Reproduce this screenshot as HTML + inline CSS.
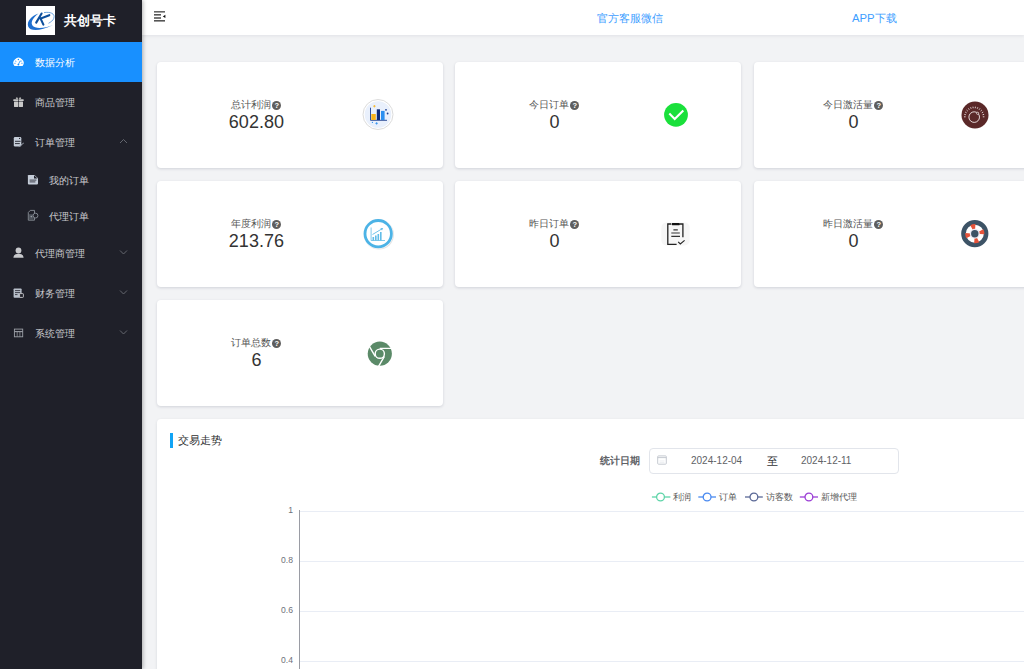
<!DOCTYPE html>
<html><head><meta charset="utf-8">
<style>
*{margin:0;padding:0;box-sizing:border-box}
html,body{width:1024px;height:669px;overflow:hidden}
body{font-family:"Liberation Sans",sans-serif;background:#f2f3f5;position:relative;color:#333}
svg{position:absolute;overflow:visible}
#side{position:absolute;left:0;top:0;width:142px;height:669px;background:#1f2029;z-index:3;box-shadow:1px 0 4px rgba(0,0,0,.3)}
#logo{position:absolute;left:26px;top:6px;width:29px;height:29px;background:#fff}
#brand{position:absolute;left:64px;top:11px;color:#fff;font-weight:bold;font-size:13px;line-height:20px}
.mi{position:absolute;left:0;width:142px;height:40px;color:#c9cacd;font-size:10px;line-height:40px}
.mi .t{position:absolute;left:35px;top:1.2px}
.mi.sub .t{left:49px}
.mi.act{background:#1890ff;color:#fff}
#hdr{position:absolute;left:142px;top:0;width:882px;height:35px;background:#fff;box-shadow:0 1px 3px rgba(20,30,60,.08);z-index:2}
.hl{position:absolute;top:10px;font-size:11.3px;line-height:16px;color:#409eff}
.card{position:absolute;width:286px;height:106px;background:#fff;border-radius:4px;box-shadow:0 1px 3px rgba(20,30,60,.15)}
.card .lb{position:absolute;left:0;top:37px;width:198.8px;text-align:center;font-size:10px;line-height:12px;color:#555}
.card .vl{position:absolute;left:0;top:49px;width:198.8px;text-align:center;font-size:18px;line-height:22px;color:#333}
.q{display:inline-block;width:9px;height:9px;border-radius:50%;background:#5e5e5e;color:#fff;font-size:7.5px;line-height:9px;text-align:center;vertical-align:0px;font-weight:bold;margin-left:1px}
#chart{position:absolute;left:157px;top:419px;width:900px;height:300px;background:#fff;border-radius:4px;box-shadow:0 1px 3px rgba(20,30,60,.12)}
</style></head><body>
<div id="side">
  <div id="logo"><svg width="29" height="29" viewBox="0 0 29 29" style="left:0;top:0">
    <path d="M12.5,7.6 C5.5,10 0.5,15.5 2.2,20.5 C4,25.5 14,25.5 27,19 C19,22.3 9,23.5 6.3,19.3 C4.3,15.5 8,11 12.5,7.6 Z" fill="#1f6fcf"/>
    <path d="M18,6.6 C24,5.6 29.5,7.5 27.8,12.3 C27,14.5 25,16 22.5,17.3" fill="none" stroke="#4a8fd8" stroke-width="0.8"/>
    <path d="M15.6,7.5 L10.2,16.6 M23.3,9.2 L14.6,12.6 L17.4,18.6" fill="none" stroke="#0d4f9c" stroke-width="2.1" stroke-linecap="round"/>
  </svg></div>
  <div id="brand">共创号卡</div>
  <div class="mi act" style="top:42px"><span class="t">数据分析</span></div>
  <div class="mi" style="top:82px"><span class="t">商品管理</span></div>
  <div class="mi" style="top:122px"><span class="t">订单管理</span></div>
  <div class="mi sub" style="top:161px;height:37px;line-height:37px"><span class="t">我的订单</span></div>
  <div class="mi sub" style="top:197px;height:37px;line-height:37px"><span class="t">代理订单</span></div>
  <div class="mi" style="top:233px"><span class="t">代理商管理</span></div>
  <div class="mi" style="top:273px"><span class="t">财务管理</span></div>
  <div class="mi" style="top:313px"><span class="t">系统管理</span></div>
  <!-- menu icons -->
  <svg width="142" height="669" viewBox="0 0 142 669" style="left:0;top:0">
    <!-- dashboard -->
    <path d="M14.45,66 A5.1,5.1 0 1 1 22.55,66 Z" fill="#fff"/>
    <g fill="#1890ff"><circle cx="18.4" cy="59.4" r="0.75"/><circle cx="18.4" cy="64.6" r="0.9"/></g>
    <path d="M15.2,61 L16.3,61.5 M21.7,61 L20.6,61.5 M14.3,63.3 H15.6 M22.6,63.3 H21.3 M18.5,64.2 L20.3,60.6" stroke="#1890ff" stroke-width="0.8" fill="none"/>
    <!-- gift -->
    <g fill="#c9c9c9"><rect x="13.3" y="99.3" width="5" height="1.8" rx="0.4"/><rect x="18.9" y="99.3" width="4.8" height="1.8" rx="0.4"/><rect x="14" y="101.6" width="4.3" height="5.3" rx="0.4"/><rect x="18.9" y="101.6" width="4.1" height="5.3" rx="0.4"/>
    <path d="M15.8,99.2 Q15.6,96.8 17.5,97.5 L18.4,99.2 Z M21.2,99.2 Q21.4,96.8 19.5,97.5 L18.6,99.2 Z" fill="#a9a9a9"/></g>
    <!-- order -->
    <rect x="13.8" y="137" width="7.5" height="9.5" rx="1.2" fill="#c5cdd9"/>
    <path d="M15,141.3 H20.6 M15,143.6 H19.8" stroke="#1f2029" stroke-width="0.9"/>
    <circle cx="19.6" cy="138.4" r="0.6" fill="#1f2029"/>
    <path d="M18.8,146.6 L23.8,143" stroke="#9aa2ad" stroke-width="1"/>
    <!-- up arrow -->
    <path d="M120,143 L123.5,139.5 L127,143" fill="none" stroke="#6b6e76" stroke-width="0.9"/>
    <!-- my orders doc -->
    <path d="M28.6,174.9 H34.5 L38,178.2 V183.6 Q38,184.4 37.2,184.4 H28.6 Q27.9,184.4 27.9,183.6 V175.6 Q27.9,174.9 28.6,174.9 Z" fill="#c5cdd9"/>
    <path d="M34,175.2 L37.6,178.6 H34 Z" fill="#1f2029"/>
    <path d="M29.6,180.1 H36.4 M29.6,181.9 H35.4" stroke="#1f2029" stroke-width="0.8"/>
    <!-- agent orders -->
    <rect x="29" y="214.2" width="4.6" height="5.3" fill="#4d525b"/>
    <path d="M28.3,212.5 L30.3,210.4 H34.5 V213.2 M34.5,218 V220.2 H28.3 V212.5" fill="none" stroke="#8a9099" stroke-width="0.9"/>
    <circle cx="35.5" cy="215.6" r="2.4" fill="#1f2029" stroke="#8a9099" stroke-width="0.9"/>
    <circle cx="31.3" cy="216.6" r="0.8" fill="#9aa0a8"/>
    <!-- user -->
    <circle cx="18.5" cy="250.5" r="2.9" fill="#c9cacd"/>
    <path d="M13.4,257.8 Q13.6,253.8 18.5,253.8 Q23.4,253.8 23.6,257.8 Z" fill="#c9cacd"/>
    <!-- finance -->
    <rect x="13.6" y="288.4" width="8" height="9.4" rx="0.8" fill="#b9c0cb"/>
    <path d="M15,290.6 H20.2 M15,292.6 H20.2 M15,294.6 H17.5" stroke="#1f2029" stroke-width="0.8"/>
    <rect x="19.6" y="293.6" width="3.8" height="3.8" rx="0.6" fill="#1f2029" stroke="#c9cacd" stroke-width="0.9"/>
    <!-- system table -->
    <rect x="14.4" y="329.1" width="8.3" height="7.7" fill="none" stroke="#9da1a8" stroke-width="0.9"/>
    <path d="M14.4,331.6 H22.7" stroke="#9da1a8" stroke-width="1.1"/>
    <path d="M17.2,331.6 V336.8 M19.9,331.6 V336.8" stroke="#9da1a8" stroke-width="0.7"/>
    <!-- down arrows -->
    <path d="M120,250.5 L123.5,254 L127,250.5 M120,290.5 L123.5,294 L127,290.5 M120,330.5 L123.5,334 L127,330.5" fill="none" stroke="#6b6e76" stroke-width="0.9"/>
  </svg>
</div>
<div id="hdr">
  <svg width="13" height="12" viewBox="0 0 13 12" style="left:12px;top:11px">
    <rect x="0" y="0" width="11" height="1.6" fill="#666"/>
    <rect x="0" y="3" width="7" height="1.6" fill="#555"/>
    <rect x="0" y="6.2" width="7" height="1.6" fill="#555"/>
    <rect x="0" y="9" width="11" height="1.6" fill="#555"/>
    <path d="M8.8,5.4 L11.4,3.8 V7.1 Z" fill="#111"/>
  </svg>
  <span class="hl" style="left:455px">官方客服微信</span>
  <span class="hl" style="left:710px">APP下载</span>
</div>

<div class="card" style="left:157px;top:62px"><div class="lb">总计利润<span class="q">?</span></div><div class="vl">602.80</div>
  <svg width="40" height="40" viewBox="0 0 40 40" style="left:201px;top:33px">
    <circle cx="20" cy="19.5" r="15" fill="#fff" stroke="#dcdcdc" stroke-width="1"/>
    <circle cx="20" cy="19.5" r="13.3" fill="#e9f0fc"/>
    <path d="M12.5,12.7 V25.3 H29" fill="none" stroke="#1d3f8f" stroke-width="0.9"/>
    <rect x="13.3" y="19" width="4.5" height="6" fill="#f7b21a"/>
    <rect x="18.8" y="14.3" width="3.2" height="10.7" fill="#0f2c7a"/>
    <rect x="23" y="15.9" width="3.6" height="9.1" fill="#2b8ff0"/>
    <path d="M16.4,10 V12.4 M15.2,11.2 H17.6" stroke="#f7b21a" stroke-width="0.8"/>
    <circle cx="28" cy="14.8" r="0.9" fill="#1d3f8f"/><circle cx="29.6" cy="18.5" r="0.9" fill="#1d3f8f"/>
    <circle cx="14.4" cy="27.4" r="0.6" fill="#2b8ff0"/><path d="M18.6,27.2 V29.6 M17.4,28.4 H19.8" stroke="#2b8ff0" stroke-width="0.8"/>
  </svg>
</div>
<div class="card" style="left:455px;top:62px"><div class="lb">今日订单<span class="q">?</span></div><div class="vl">0</div>
  <svg width="30" height="30" viewBox="0 0 30 30" style="left:206px;top:38px">
    <circle cx="15" cy="14.8" r="11.9" fill="#1ae03b"/>
    <path d="M8.3,13.6 L13.7,19 L22.3,10.4" fill="none" stroke="#fff" stroke-width="2.1"/>
  </svg>
</div>
<div class="card" style="left:754px;top:62px"><div class="lb">今日激活量<span class="q">?</span></div><div class="vl">0</div>
  <svg width="30" height="30" viewBox="0 0 30 30" style="left:206px;top:38px">
    <circle cx="15" cy="15" r="13.5" fill="#5a2828"/>
    <path d="M5.60,16.80 L4.00,16.80 M5.85,14.74 L4.30,14.36 M6.59,12.80 L5.17,12.06 M7.76,11.10 L6.57,10.04 M9.31,9.72 L8.41,8.41 M11.15,8.76 L10.58,7.26 M13.16,8.26 L12.97,6.67 M15.24,8.26 L15.43,6.67 M17.25,8.76 L17.82,7.26 M19.09,9.72 L19.99,8.41 M20.64,11.10 L21.83,10.04 M21.81,12.80 L23.23,12.06 M22.55,14.74 L24.10,14.36 M22.80,16.80 L24.40,16.80" stroke="#eadede" stroke-width="0.9"/>
    <circle cx="14.2" cy="17.1" r="5.3" fill="none" stroke="#f2eaea" stroke-width="0.9"/>
    <circle cx="17.6" cy="13.3" r="1.1" fill="#5a2828" stroke="#f2eaea" stroke-width="0.7"/>
  </svg>
</div>
<div class="card" style="left:157px;top:181px"><div class="lb">年度利润<span class="q">?</span></div><div class="vl">213.76</div>
  <svg width="40" height="40" viewBox="0 0 40 40" style="left:200px;top:33px">
    <circle cx="22" cy="20.6" r="15" fill="#e4e4e4"/>
    <circle cx="21.2" cy="19.8" r="15" fill="#f9f9f9"/>
    <circle cx="21.2" cy="19.7" r="13.2" fill="#fff" stroke="#4cb3e6" stroke-width="2.8"/>
    <path d="M14.1,13.5 V26.5 H28" fill="none" stroke="#62bde8" stroke-width="0.8"/>
    <g fill="#62bde8"><rect x="15.5" y="23" width="1.6" height="3.5"/><rect x="18" y="21.5" width="1.6" height="5"/><rect x="20.5" y="20" width="1.6" height="6.5"/><rect x="23" y="18" width="1.6" height="8.5"/></g>
    <path d="M15.5,20.5 L25,14.8" stroke="#62bde8" stroke-width="0.9"/>
    <path d="M23.3,14.2 L26.2,14 L25,16.5 Z" fill="#62bde8"/>
  </svg>
</div>
<div class="card" style="left:455px;top:181px"><div class="lb">昨日订单<span class="q">?</span></div><div class="vl">0</div>
  <svg width="32" height="30" viewBox="0 0 32 30" style="left:205px;top:40px">
    <rect x="1.4" y="1.5" width="28.3" height="23" rx="5" fill="#f6f6f6"/>
    <path d="M11,3 H7.8 V23.4 H16.6 M19.8,3 H22.9 V16.2" fill="none" stroke="#222" stroke-width="1.3"/>
    <rect x="11.6" y="2" width="8.3" height="2.3" rx="0.8" fill="#111"/>
    <path d="M13.4,8.8 H17.8 M11.3,12 H19.8 M11.3,15.4 H20" stroke="#333" stroke-width="1.2"/>
    <path d="M18.2,20.8 L20.3,22.9 L24.6,19.3" fill="none" stroke="#222" stroke-width="1.1"/>
  </svg>
</div>
<div class="card" style="left:754px;top:181px"><div class="lb">昨日激活量<span class="q">?</span></div><div class="vl">0</div>
  <svg width="30" height="30" viewBox="0 0 30 30" style="left:206px;top:38px">
    <circle cx="14.8" cy="14.7" r="11.3" fill="#fff" stroke="#3d5366" stroke-width="4.6"/>
    <g fill="#e4533a"><path d="M14.80,14.70 L10.29,6.22 A9.6,9.6 0 0 1 15.47,5.12 Z"/><path d="M14.80,14.70 L23.28,10.19 A9.6,9.6 0 0 1 24.38,15.37 Z"/><path d="M14.80,14.70 L19.31,23.18 A9.6,9.6 0 0 1 14.13,24.28 Z"/><path d="M14.80,14.70 L6.32,19.21 A9.6,9.6 0 0 1 5.22,14.03 Z"/></g>
    <circle cx="14.8" cy="14.7" r="5" fill="#ece8f3"/>
    <circle cx="14.8" cy="14.7" r="3.7" fill="#3d5366"/>
  </svg>
</div>
<div class="card" style="left:157px;top:300px"><div class="lb">订单总数<span class="q">?</span></div><div class="vl">6</div>
  <svg width="30" height="30" viewBox="0 0 30 30" style="left:208px;top:39px">
    <circle cx="14.8" cy="14.7" r="12.1" fill="#5b8a68"/>
    <circle cx="14.8" cy="14.7" r="5.3" fill="#fff"/>
    <circle cx="14.8" cy="14.7" r="3.9" fill="#5b8a68"/>
    <path d="M14.8,9.4 H27 M10.2,17.35 L4.1,6.8 M19.4,17.35 L13.3,27.9" stroke="#fff" stroke-width="1.4"/>
  </svg>
</div>

<div id="chart">
  <div style="position:absolute;left:13px;top:14px;width:3px;height:15px;background:#12a4f5"></div>
  <div style="position:absolute;left:21px;top:13px;font-size:11.2px;line-height:16px;color:#303133">交易走势</div>
  <div style="position:absolute;left:443px;top:35px;font-size:10px;line-height:14px;color:#606266;font-weight:bold">统计日期</div>
  <div style="position:absolute;left:492px;top:29px;width:250px;height:26px;border:1px solid #e2e5eb;border-radius:4px"></div>
  <svg width="12" height="12" viewBox="0 0 12 12" style="left:500px;top:36px">
    <rect x="0.7" y="0.9" width="8.6" height="8.3" rx="0.8" fill="none" stroke="#c0c4cc" stroke-width="0.9"/>
    <path d="M0.7,2.6 H9.3" stroke="#c0c4cc" stroke-width="0.9"/>
    <path d="M2.5,6 H7.5 M2.5,7.6 H7.5" stroke="#dfe2e8" stroke-width="0.6"/>
  </svg>
  <div style="position:absolute;left:534px;top:35px;font-size:10px;line-height:14px;color:#606266">2024-12-04</div>
  <div style="position:absolute;left:610px;top:35px;font-size:10.5px;line-height:14px;color:#303133">至</div>
  <div style="position:absolute;left:644px;top:35px;font-size:10px;line-height:14px;color:#606266">2024-12-11</div>
  <!-- legend -->
  <svg width="220" height="14" viewBox="0 0 220 14" style="left:493px;top:71px">
    <g fill="#fff" stroke-width="1.3">
      <path d="M1.9,7 H20.4" stroke="#5ed4a8"/><circle cx="10.5" cy="7" r="3.9" stroke="#5ed4a8"/>
      <path d="M48.3,7 H66" stroke="#4a8af0"/><circle cx="57.1" cy="7" r="3.9" stroke="#4a8af0"/>
      <path d="M95,7 H112.8" stroke="#5a6896"/><circle cx="103.9" cy="7" r="3.9" stroke="#5a6896"/>
      <path d="M149.8,7 H168" stroke="#9b3ed5"/><circle cx="158.9" cy="7" r="3.9" stroke="#9b3ed5"/>
    </g>
  </svg>
  <div style="position:absolute;top:71px;font-size:8.6px;line-height:14px;color:#555;left:516px">利润</div>
  <div style="position:absolute;top:71px;font-size:8.6px;line-height:14px;color:#555;left:562px">订单</div>
  <div style="position:absolute;top:71px;font-size:8.6px;line-height:14px;color:#555;left:609px">访客数</div>
  <div style="position:absolute;top:71px;font-size:8.6px;line-height:14px;color:#555;left:664px">新增代理</div>
  <!-- axis -->
  <div style="position:absolute;left:143px;top:92px;width:800px;height:1px;background:#e9edf5"></div>
  <div style="position:absolute;left:143px;top:142px;width:800px;height:1px;background:#e9edf5"></div>
  <div style="position:absolute;left:143px;top:192px;width:800px;height:1px;background:#e9edf5"></div>
  <div style="position:absolute;left:143px;top:242px;width:800px;height:1px;background:#e9edf5"></div>
  <div style="position:absolute;left:142px;top:91px;width:1px;height:300px;background:#9a9ca4"></div>
  <div style="position:absolute;left:100px;width:36px;text-align:right;font-size:8.6px;line-height:10px;color:#6e7079;top:86px">1</div>
  <div style="position:absolute;left:100px;width:36px;text-align:right;font-size:8.6px;line-height:10px;color:#6e7079;top:136px">0.8</div>
  <div style="position:absolute;left:100px;width:36px;text-align:right;font-size:8.6px;line-height:10px;color:#6e7079;top:186px">0.6</div>
  <div style="position:absolute;left:100px;width:36px;text-align:right;font-size:8.6px;line-height:10px;color:#6e7079;top:236px">0.4</div>
</div>
</body></html>
